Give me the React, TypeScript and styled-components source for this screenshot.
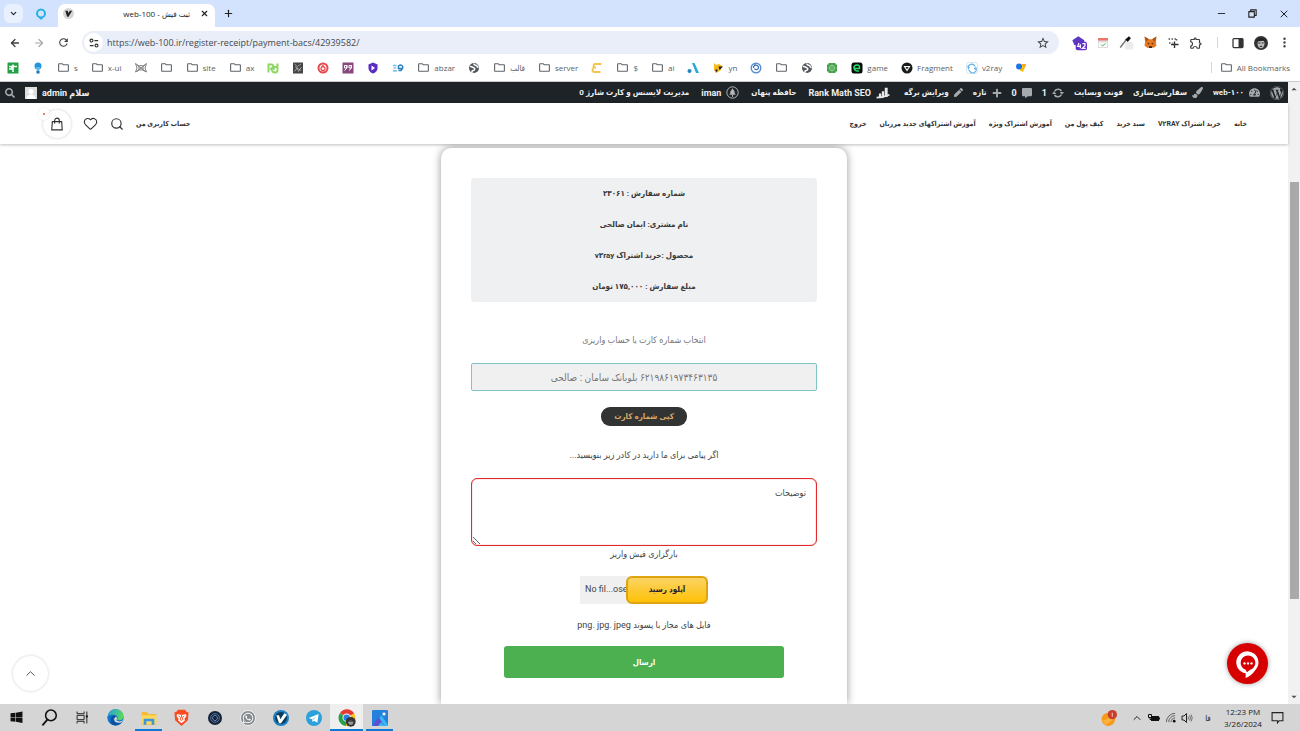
import React from 'react';
import styled, { createGlobalStyle, css } from 'styled-components';
import { ArrowLeft, ArrowRight, X, Minus, Plus, ChevronDown, ChevronUp, Heart, Search, EllipsisVertical } from 'lucide-react';
import { FaWordpress, FaTachometerAlt, FaPaintBrush, FaCommentAlt, FaPen, FaWhatsapp, FaSearch, FaPlus } from 'react-icons/fa';
import { MdOutlineExtension, MdOutlineFolder, MdStarBorder, MdRefresh } from 'react-icons/md';

const uiFont = "'Open Sans', 'Noto Sans', 'DejaVu Sans Condensed', 'DejaVu Sans', sans-serif";
const siteFont = "Roboto, 'DejaVu Sans Condensed', 'DejaVu Sans', sans-serif";

const GlobalStyle = createGlobalStyle`
  * { box-sizing: border-box; }
  body { margin: 0; background: #fff; font-family: ${uiFont}; }
  button { border: 0; padding: 0; background: none; font: inherit; color: inherit; cursor: pointer; }
  a { color: inherit; text-decoration: none; }
  svg { display: block; flex: none; }
`;

const Desktop = styled.div`
  display: flex;
  flex-direction: column;
  min-height: 100vh;
  overflow: hidden;
`;

/* ---------- browser frame ---------- */

const TabStrip = styled.header`
  display: flex;
  align-items: center;
  height: 27px;
  padding: 0 10px 0 4px;
  background: #d3e3fd;
  color: #1f1f1f;
`;

const TabSearch = styled.button`
  display: grid;
  place-items: center;
  width: 19px;
  height: 19px;
  border-radius: 6px;
  background: #e9f1fe;
`;

const PinnedTab = styled.button`
  display: grid;
  place-items: center;
  width: 35px;
  height: 27px;
`;

const ActiveTab = styled.div`
  display: flex;
  align-items: center;
  align-self: flex-end;
  width: 157px;
  height: 23px;
  padding: 0 6px 4px 5px;
  border-radius: 7px 7px 0 0;
  background: #fff;
`;

const TabTitle = styled.span`
  flex: 1;
  padding-right: 10px;
  font-size: 8px;
  text-align: right;
  white-space: nowrap;
`;

const NewTab = styled.button`
  margin-left: 8px;
`;

const WindowButtons = styled.div`
  display: flex;
  gap: 20px;
  margin-left: auto;
`;

const Toolbar = styled.div`
  display: flex;
  align-items: center;
  height: 31px;
  padding: 0 9px;
  background: #fff;
  color: #3c3f43;
`;

const NavButtons = styled.div`
  display: flex;
  align-items: center;
  gap: 12px;
  margin-right: 12px;
`;

const AddressBar = styled.label`
  display: flex;
  align-items: center;
  flex: 1;
  height: 23px;
  padding: 0 9px 0 2px;
  border-radius: 12px;
  background: #eaeef8;
`;

const SiteInfo = styled.span`
  display: grid;
  place-items: center;
  width: 19px;
  height: 19px;
  border-radius: 50%;
  background: #fff;
`;

const AddressInput = styled.input`
  flex: 1;
  min-width: 0;
  padding: 0 4px;
  border: 0;
  outline: 0;
  background: none;
  color: #45484d;
  font: 9px ${uiFont};
`;

const Extensions = styled.div`
  display: flex;
  align-items: center;
  gap: 10px;
  margin-left: 12px;
`;

const Divider = styled.span`
  width: 1px;
  height: 11px;
  margin: 0 4px;
  background: #c4daf8;
`;

const Avatar = styled.span`
  display: grid;
  place-items: center;
  width: 14px;
  height: 14px;
  border-radius: 50%;
  overflow: hidden;
`;

const BookmarkBar = styled.nav`
  display: flex;
  align-items: center;
  gap: 13px;
  height: 24px;
  padding: 0 10px 4px 7px;
  border-bottom: 1px solid #c9cbce;
  background: #fff;
`;

const BookmarkLink = styled.a`
  display: flex;
  align-items: center;
  gap: 4px;
  color: #5b5f64;
  font-size: 8px;
  white-space: nowrap;
`;

const AllBookmarks = styled.span`
  display: flex;
  align-items: center;
  gap: 4px;
  margin-left: auto;
`;

/* ---------- page inside the browser ---------- */

const Viewport = styled.div`
  display: flex;
  flex: 1;
`;

const Site = styled.div`
  position: relative;
  display: flex;
  flex-direction: column;
  flex: 1;
  min-width: 0;
  font-family: ${siteFont};
  direction: rtl;
`;

const AdminBar = styled.div`
  display: flex;
  align-items: center;
  height: 21px;
  padding: 0 4px 0 5px;
  background: #1d2327;
  color: #eef0f1;
`;

const AdminGroup = styled.div<{ $gap?: number; $end?: boolean }>`
  display: flex;
  align-items: center;
  gap: ${(p) => p.$gap ?? 10}px;
  margin-right: ${(p) => (p.$end ? 'auto' : 0)};
`;

const AdminLink = styled.a<{ $latin?: boolean }>`
  display: flex;
  align-items: center;
  gap: 5px;
  font-size: ${(p) => (p.$latin ? 9 : 8)}px;
  font-weight: 700;
  line-height: 20px;
  white-space: nowrap;
  svg { color: #a7aaad; }
`;

const AdminSeparator = styled.span`
  width: 14px;
`;

const SiteHeader = styled.header`
  position: relative;
  display: flex;
  align-items: center;
  justify-content: space-between;
  height: 41px;
  padding: 0 41px 0 43px;
  background: #fff;
  box-shadow: 0 1px 3px rgba(0, 0, 0, 0.25);
  color: #333;
  font-size: 7px;
  font-weight: 700;
`;

const MainNav = styled.nav`
  display: flex;
  gap: 13px;
  white-space: nowrap;
`;

const AccountTools = styled.div`
  display: flex;
  align-items: center;
  gap: 12px;
`;

const CartButton = styled.button`
  position: relative;
  display: grid;
  place-items: center;
  width: 28px;
  height: 28px;
  border-radius: 50%;
  background: #fff;
  box-shadow: 0 0 3px rgba(0, 0, 0, 0.22);
`;

const CartBadge = styled.span`
  position: absolute;
  top: -2px;
  left: -5px;
  display: grid;
  place-items: center;
  width: 12px;
  height: 12px;
  border-radius: 50%;
  background: #fff;
  box-shadow: 0 0 2px rgba(0, 0, 0, 0.12);
  &::after {
    content: '';
    width: 2px;
    height: 2px;
    border-radius: 50%;
    background: #e55;
  }
`;

const Main = styled.main`
  display: flex;
  justify-content: center;
  flex: 1;
  padding-top: 4px;
  overflow: hidden;
  background: #fff;
`;

const Card = styled.form`
  display: flex;
  flex-direction: column;
  align-items: center;
  width: 406px;
  padding: 30px 30px 24px;
  border-radius: 10px 10px 0 0;
  background: #fff;
  box-shadow: 0 0 9px rgba(0, 0, 0, 0.42);
  color: #444;
  font-size: 9px;
`;

const Summary = styled.section`
  align-self: stretch;
  border-radius: 3px;
  background: #eff0f2;
`;

const SummaryLine = styled.p`
  margin: 0;
  color: #3a3a3a;
  font-size: 8px;
  font-weight: 700;
  line-height: 31px;
  text-align: center;
`;

const FieldLabel = styled.label<{ $top?: number; $bottom?: number; $muted?: boolean }>`
  margin-top: ${(p) => p.$top ?? 0}px;
  margin-bottom: ${(p) => p.$bottom ?? 0}px;
  color: ${(p) => (p.$muted ? '#777' : '#444')};
  line-height: 16px;
  text-align: center;
`;

const control = css`
  align-self: stretch;
  margin: 0;
  outline: 0;
`;

const CardSelect = styled.select`
  ${control}
  height: 28px;
  padding: 0 20px 0 0;
  border: 1px solid #7cc5c5;
  border-radius: 2px;
  appearance: none;
  background: #f0f0f0;
  color: #777;
  font: 10px ${siteFont};
  text-align: center;
  text-align-last: center;
`;

const CopyButton = styled.button`
  width: 86px;
  height: 19px;
  margin-top: 16px;
  border-radius: 9px;
  background: #323434;
  color: #d9a768;
  font-size: 8px;
  font-weight: 700;
`;

const Notes = styled.textarea`
  ${control}
  height: 68px;
  padding: 6px 10px;
  border: 1px solid #e02b30;
  border-radius: 6px;
  box-shadow: inset 0 0 1px #e02b30;
  font: 9px/16px ${siteFont};
  resize: vertical;
  &::placeholder { color: #444; opacity: 1; }
`;

const Upload = styled.label`
  position: relative;
  display: flex;
  direction: ltr;
  height: 28px;
  margin-top: 14px;
  background: #f0f0f0;
  input {
    position: absolute;
    inset: 0;
    width: 100%;
    opacity: 0;
  }
`;

const FileName = styled.span`
  padding-left: 5px;
  width: 46px;
  line-height: 27px;
  white-space: nowrap;
`;

const UploadFace = styled.span`
  width: 82px;
  border: 2px solid #dfa30f;
  border-radius: 6px;
  background: linear-gradient(#fbd364, #ffc107);
  color: #221b2c;
  font-size: 8px;
  font-weight: 700;
  line-height: 24px;
  text-align: center;
`;

const Submit = styled.button`
  width: 280px;
  height: 32px;
  margin-top: 13px;
  border-radius: 3px;
  background: #4caf50;
  color: #fff;
  font-size: 8px;
  font-weight: 700;
`;

const ToTop = styled.button`
  position: absolute;
  left: 13px;
  bottom: 13px;
  display: grid;
  place-items: center;
  width: 35px;
  height: 35px;
  border-radius: 50%;
  background: #fff;
  box-shadow: 0 0 3px rgba(0, 0, 0, 0.2);
  color: #555;
`;

const ChatButton = styled.button`
  position: absolute;
  right: 20px;
  bottom: 20px;
  display: grid;
  place-items: center;
  width: 41px;
  height: 41px;
  border-radius: 50%;
  background: #d60000;
  box-shadow: 0 0 5px rgba(0, 0, 0, 0.4);
`;

const Scrollbar = styled.div`
  display: flex;
  flex-direction: column;
  align-items: center;
  width: 12px;
  padding: 3px 0;
  background: #f1f1f1;
`;

const Track = styled.span<{ $grow: number }>`
  flex: ${(p) => p.$grow} 0 0;
`;

const Thumb = styled.span`
  flex: 414 0 0;
  width: 9px;
  background: #a9a9a9;
`;

/* ---------- taskbar ---------- */

const Taskbar = styled.footer`
  display: flex;
  align-items: center;
  justify-content: space-between;
  height: 27px;
  padding-right: 16px;
  background: #d5d5d5;
  color: #222;
`;

const TaskGroup = styled.div`
  display: flex;
`;

const TaskButton = styled.button<{ $open?: boolean; $active?: boolean }>`
  position: relative;
  display: grid;
  place-items: center;
  width: 33px;
  height: 27px;
  background: ${(p) => (p.$active ? '#efefef' : 'none')};
  &::after {
    content: '';
    position: absolute;
    bottom: 0;
    left: ${(p) => (p.$active ? 0 : 3)}px;
    right: ${(p) => (p.$active ? 0 : 3)}px;
    height: ${(p) => (p.$open || p.$active ? 2 : 0)}px;
    background: #0a7ad6;
  }
`;

const WhatsAppBadge = styled.span`
  display: grid;
  place-items: center;
  width: 16px;
  height: 16px;
  border: 1px solid #f2f2f2;
  border-radius: 50%;
  background: #858a8e;
  color: #fff;
`;

const Tray = styled.div`
  display: flex;
  align-items: center;
  gap: 5px;
  font-size: 8px;
`;

const TrayLanguage = styled.span`
  width: 20px;
  text-align: center;
`;

const WeatherIcon = styled.span`
  margin-right: 9px;
`;

const Clock = styled.time`
  width: 40px;
  margin-right: 3px;
  line-height: 12px;
  text-align: center;
  white-space: nowrap;
`;

/* ---------- drawings ---------- */

const Svg = ({ s = 12, v = 24, children }: { s?: number; v?: number; children: React.ReactNode }) => (
  <svg width={s} height={s} viewBox={`0 0 ${v} ${v}`} fill="none" aria-hidden="true">{children}</svg>
);

const Dir = () => <MdOutlineFolder size={13} color="#5f6368" />;

const Globe = () => (
  <Svg><circle cx="12" cy="12" r="10" fill="#53575c" /><path d="M4 9c4-1 5 2 8 3s1 5-2 5-2 3-1 4M12 3c-1 3 3 3 5 4s0 4 4 4" stroke="#fff" strokeWidth="3" /></Svg>
);

const Portrait = () => (
  <Svg s={14}><rect width="24" height="24" fill="#333" /><ellipse cx="12" cy="13" rx="6" ry="8" fill="#bbb" /><path d="M4 10C6 2 18 1 20 10l-4-2-8 1z" fill="#222" /><path d="M7 11h4v2H7zM13 11h4l-1 2h-3zM10 17q2-1 4 0v2h-4z" fill="#333" /></Svg>
);

type Mark = { label?: string; icon: React.ReactNode; latin?: boolean };

const bookmarks: Mark[] = [
  { icon: <Svg><rect x="1" y="1" width="22" height="22" rx="1" fill="#23a045" /><path d="M4 9h16M12 5v15M9 9v5H4" stroke="#fff" strokeWidth="3" /></Svg> },
  { icon: <Svg><circle cx="12" cy="8" r="7" fill="#2295dc" /><path d="M7 10h10l-3 6h-4z" fill="#57bce9" /><rect x="9" y="17" width="6" height="6" fill="#1872b4" /></Svg> },
  { label: 's', icon: <Dir /> },
  { label: 'x-ui', icon: <Dir /> },
  { icon: <Svg><path d="M1 3l7 5 4-1 4 1 7-5-3 9 3 8-8-4H9l-8 4 3-8zM4 6l16 12M20 6L4 18M8 8v8M16 8v8" stroke="#808080" strokeWidth="2" /></Svg> },
  { icon: <Dir /> },
  { label: 'site', icon: <Dir /> },
  { label: 'ax', icon: <Dir /> },
  { icon: <Svg><path d="M3 21V5h6q4 0 3 5l-4 4 4 6q9 3 9-4V3M20 10h-4q-4 1-2 6" stroke="#8bd862" strokeWidth="4" /></Svg> },
  { icon: <Svg><rect x="2" y="1" width="20" height="22" fill="#444" /><path d="M5 4l6 5 7-5M5 19l5-7 3 7 6-9M6 9l12 8" stroke="#bbb" strokeWidth="1.5" /></Svg> },
  { icon: <Svg><circle cx="12" cy="12" r="9" stroke="#e5484d" strokeWidth="4" /><circle cx="12" cy="13" r="4" stroke="#e5484d" strokeWidth="2.5" /><path d="M12 6v5" stroke="#e5484d" strokeWidth="3" /></Svg> },
  { icon: <Svg><rect x="1" y="1" width="22" height="22" fill="#87467d" /><path d="M10 7H5v5h5V7q0 8-5 10M19 7h-5v5h5V7q0 8-5 10" stroke="#fff" strokeWidth="2" /></Svg> },
  { icon: <Svg><path d="M12 1l9 4v8q-1 7-9 10Q4 20 3 13V5z" fill="#5b2bc4" /><path d="M9 7l7 5-7 5z" fill="#fff" /></Svg> },
  { icon: <Svg><path d="M2 8q3-3 7 0M3 12h5M2 17q4 2 8 0" stroke="#7cc0e6" strokeWidth="3" /><path d="M12 9q4-5 8-2t-2 10h-5M13 7v6h7" stroke="#2b7fc0" strokeWidth="3" /></Svg> },
  { label: 'abzar', icon: <Dir /> },
  { icon: <Globe /> },
  { label: 'قالب', icon: <Dir /> },
  { label: 'server', icon: <Dir /> },
  { icon: <Svg><path d="M21 4H8q-3 0-3 7h5M4 13q-3 7 3 7h12" stroke="#f5c350" strokeWidth="4" /></Svg> },
  { label: '$', icon: <Dir /> },
  { label: 'ai', icon: <Dir /> },
  { icon: <Svg><path d="M10 2h5l9 20h-6z" fill="#2aa9d2" /><circle cx="5" cy="18" r="4" fill="#1f87bb" /></Svg> },
  { label: 'yn', icon: <Svg><path d="M4 2l4 4 6-2 7 4-4 9-9 5-4-6z" fill="#f6b91d" /><path d="M13 9h9l-7 7zM6 16l5-2-1 7z" fill="#222" /></Svg> },
  { icon: <Svg><circle cx="12" cy="12" r="9.500" stroke="#5b8fd0" strokeWidth="3" /><path d="M7 12a5 5 0 0 1 10-1c0 5-6 6-8 2M8 6q6-2 9 4" stroke="#3a6fb8" strokeWidth="2.400" /></Svg> },
  { icon: <Dir /> },
  { icon: <Globe /> },
  { icon: <Svg><path d="M5 2h14v3h3v14h-3v3H5v-3H2V5h3z" fill="#43a047" /><circle cx="12" cy="12" r="5" stroke="#a5d6a7" strokeWidth="2" /><path d="M12 3v18M3 12h18" stroke="#8bc98e" /></Svg> },
  { label: 'game', icon: <Svg><rect x="1" y="1" width="22" height="22" rx="5" fill="#070b09" /><path d="M7 13h10q1-7-5-7t-6 6q1 7 10 6" stroke="#2be06d" strokeWidth="3" /></Svg> },
  { label: 'Fragment', icon: <Svg><circle cx="12" cy="12" r="11" fill="#17191b" /><path d="M5 8h14l-7 11z" fill="#fff" /><path d="M9 10h6l-3 5z" fill="#17191b" /></Svg> },
  { label: 'v2ray', icon: <Svg><rect x="1" y="1" width="22" height="22" rx="4" stroke="#a9d3ef" /><path d="M5 14a7 7 0 0 1 11-8l2 3M19 10a7 7 0 0 1-11 9l-3-4M3 8l4 4M21 16l-5-4" stroke="#65b1e3" strokeWidth="2.4" /></Svg> },
  { icon: <Svg><path d="M9 5h13l-6 15-6-3z" fill="#fbbc05" /><circle cx="8" cy="9" r="6" fill="#1a73e8" /><path d="M13 4h9l-2 8z" fill="#f9a825" /></Svg> },
];

const TuneIcon = () => (
  <Svg s={10}><path d="M13 6h9M2 18h9" stroke="#333" strokeWidth="3" /><circle cx="6" cy="6" r="3.500" stroke="#333" strokeWidth="2.800" /><circle cx="18" cy="18" r="3.500" stroke="#333" strokeWidth="2.800" /></Svg>
);

const updatesIcon = (
  <Svg><path d="M5 9a8 8 0 0 1 14-1M19 15a8 8 0 0 1-14 1" stroke="#a7aaad" strokeWidth="3" /><path d="M15 10h9l-4 5zM0 14h9L4 9z" fill="#a7aaad" /></Svg>
);

const rankIcon = (
  <Svg s={14}><path d="M5 13h4v6H5zM10 9h4v10h-4zM15 3h5v16h-5z" fill="#e8e8e8" /><path d="M1 20q12 0 22-5" stroke="#e8e8e8" strokeWidth="3" /></Svg>
);

const litespeedIcon = (
  <Svg s={13}><circle cx="12" cy="12" r="10.500" stroke="#b5b8ba" strokeWidth="1.800" /><path d="M12 4l5 8h-2l3 4H6l3-4H7z" fill="#b5b8ba" /><path d="M12 16v4" stroke="#b5b8ba" strokeWidth="2" /></Svg>
);

const coreItems: Mark[] = [
  { icon: <FaWordpress size={14} /> },
  { label: 'web-۱۰۰', icon: <FaTachometerAlt size={11} /> },
  { label: 'سفارشی‌سازی', icon: <FaPaintBrush size={11} /> },
  { label: 'فونت وبسایت', icon: null },
  { label: '1', icon: updatesIcon, latin: true },
  { label: '0', icon: <FaCommentAlt size={10} />, latin: true },
  { label: 'تازه', icon: <FaPlus size={10} /> },
  { label: 'ویرایش برگه', icon: <FaPen size={9} /> },
];

const pluginItems: Mark[] = [
  { label: 'Rank Math SEO', icon: rankIcon, latin: true },
  { label: 'حافظه پنهان', icon: null },
  { label: 'iman', icon: litespeedIcon, latin: true },
  { label: 'مدیریت لایسنس و کارت شارژ 0', icon: null },
];

const navItems = [
  'خانه', 'خرید اشتراک V۲RAY', 'سبد خرید', 'کیف پول من', 'آموزش اشتراک ویژه',
  'آموزش اشتراکهای جدید مرزبان', 'خروج',
];

const tasks: { name: string; icon: React.ReactNode; open?: boolean; active?: boolean }[] = [
  { name: 'Start', icon: <Svg s={13}><path d="M1 4l9-1v8H1zM11 3l12-2v10H11zM1 12h9v8l-9-1zM11 12h12v10l-12-2z" fill="#111" /></Svg> },
  { name: 'Search', icon: <Svg s={17}><circle cx="14" cy="9" r="7.5" stroke="#111" strokeWidth="2.2" /><path d="M9 15l-7 8" stroke="#111" strokeWidth="2.6" /></Svg> },
  { name: 'Task view', icon: <Svg s={13}><path d="M2 1v4h13V1M2 23v-4h13v4M2 8h13v8H2zM20 1v22" stroke="#222" strokeWidth="1.8" /><path d="M18 8h4v4h-4z" fill="#222" /></Svg> },
  { name: 'Edge', icon: (
    <Svg s={17}>
      <defs>
        <linearGradient id="edgeTop" x1="0" y1="0" x2="24" y2="10" gradientUnits="userSpaceOnUse"><stop stopColor="#1f9fe0" /><stop offset="1" stopColor="#5ddb5a" /></linearGradient>
      </defs>
      <circle cx="12" cy="12" r="11.5" fill="#1272c8" />
      <path d="M1 10C3 2 9 0 13 .5c7 .5 11 5 10.500 10.500C23 16 17 17 14 15c3-4-1-7-5-7-4 0-7 1-8 2z" fill="url(#edgeTop)" />
      <path d="M9 13c-1 6 5 8 12 5-3 5-9 6-13 4S4 10 10 9c3 0 4 2 3 4z" fill="#0d4f9e" />
      <path d="M12 11q4 1 1 5 4 3 10 0l-3 3q-9 2-10-5z" fill="#d5d5d5" />
    </Svg>) },
  { name: 'File Explorer', open: true, icon: <Svg s={16}><path d="M1 3h8l2 3h12v16H1z" fill="#f5bb35" /><path d="M1 8h22v13H1z" fill="#ffd95e" /><path d="M4 13h16v9h-4v-5H8v5H4z" fill="#3a96dd" /></Svg> },
  { name: 'Brave', icon: <Svg s={17}><path d="M7 1h10l2 3 3 1-1 11-9 8-9-8L2 5l3-1z" fill="#fb4b20" /><path d="M6 7l4 1h4l4-1 1 3-3 4 1 2-5 4-5-4 1-2-3-4z" fill="#fff" /><path d="M8 10l3 2-1 3 2 1 2-1-1-3 3-2M12 8v4" stroke="#fb4b20" strokeWidth="1.300" /></Svg> },
  { name: 'Circle app', icon: <Svg s={14}><circle cx="12" cy="12" r="12" fill="#152238" /><circle cx="12" cy="12" r="7.500" stroke="#5878a8" strokeWidth="1.600" /><path d="M12 7l4 3v4l-4 3-4-3v-4z" stroke="#6f90c4" strokeWidth="1.500" /></Svg> },
  { name: 'WhatsApp', icon: <WhatsAppBadge><FaWhatsapp size={12} /></WhatsAppBadge> },
  { name: 'Vivaldi', icon: <Svg s={16}><circle cx="12" cy="12" r="12" fill="#1981c4" /><circle cx="12" cy="12" r="9" fill="#0d3d5c" /><path d="M5 8h4l2 6 6-9 4 2-9 13h-3z" fill="#fff" /></Svg> },
  { name: 'Telegram', icon: <Svg s={16}><circle cx="12" cy="12" r="12" fill="#2aa1db" /><path d="M4 12l15-6-2 13-5-3-2 2-1-4z" fill="#fff" /><path d="M9 14l7-5-5 6" fill="#9fd0ea" /></Svg> },
  { name: 'Chrome', active: true, icon: (
    <Svg s={18}>
      <path d="M12 11L2.500 5.500A11 11 0 0 1 21.500 6z" fill="#e33b2e" />
      <path d="M12 12L2.500 5.500a11 11 0 0 0 8 17z" fill="#24a148" />
      <path d="M12 12l9.500-6a11 11 0 0 1-11 16.500z" fill="#fbc116" />
      <circle cx="11.500" cy="11.500" r="5.500" fill="#fff" /><circle cx="11.500" cy="11.500" r="4.300" fill="#2f7de1" />
      <circle cx="17" cy="17" r="6.500" fill="#333" /><path d="M13 17q4-5 8 0l-2 4h-4z" fill="#999" /><path d="M13 16h8" stroke="#222" strokeWidth="1.500" />
    </Svg>) },
  { name: 'Photos', open: true, icon: <Svg s={16}><rect width="24" height="24" rx="2" fill="#2380dc" /><path d="M3 24L14 8l10 14v2z" fill="#35b7ef" /><path d="M0 24L10 11l9 13z" fill="#5d4fd0" /><path d="M9 24l5-6 5 6z" fill="#35b7ef" /><rect x="16" y="4" width="4" height="4" fill="#fff" /></Svg> },
];

const AdminItems = ({ items }: { items: Mark[] }) => (
  <>
    {items.map((a, i) => (
      <AdminLink href="#" key={i} $latin={a.latin} aria-label={a.label ?? 'WordPress'}>{a.icon}{a.label}</AdminLink>
    ))}
  </>
);

export default function App() {
  return (
    <>
      <GlobalStyle />
      <Desktop>
        <TabStrip>
          <TabSearch aria-label="Search tabs"><ChevronDown size={9} strokeWidth={3} /></TabSearch>
          <PinnedTab aria-label="Pinned tab">
            <Svg s={12}><path d="M12 1a10 10 0 0 1 8 16l-4 3-4 4-4-4-4-3a10 10 0 0 1 8-16z" fill="#25b0e2" /><circle cx="12" cy="11" r="6" fill="#d3e3fd" /></Svg>
          </PinnedTab>
          <ActiveTab>
            <Svg s={11}><circle cx="12" cy="12" r="12" fill="#d6d6d6" /><path d="M5 6h5l2 5 3-5h5l-8 13H9z" fill="#222" /></Svg>
            <TabTitle dir="rtl">ثبت فیش - web-100</TabTitle>
            <button aria-label="Close tab"><X size={9} strokeWidth={3} /></button>
          </ActiveTab>
          <NewTab aria-label="New tab"><Plus size={11} strokeWidth={2.5} /></NewTab>
          <WindowButtons>
            <button aria-label="Minimize"><Minus size={11} strokeWidth={2} /></button>
            <button aria-label="Restore"><Svg s={11}><path d="M4 8h12v12H4zM8 8V4h12v12h-4" stroke="#222" strokeWidth="2.400" /></Svg></button>
            <button aria-label="Close"><X size={12} strokeWidth={2} /></button>
          </WindowButtons>
        </TabStrip>

        <Toolbar>
          <NavButtons>
            <button aria-label="Back"><ArrowLeft size={12} strokeWidth={2.6} /></button>
            <button aria-label="Forward"><ArrowRight size={12} strokeWidth={2.4} color="#a5a7aa" /></button>
            <button aria-label="Reload"><MdRefresh size={13} /></button>
          </NavButtons>
          <AddressBar>
            <SiteInfo><TuneIcon /></SiteInfo>
            <AddressInput aria-label="Address" defaultValue="https://web-100.ir/register-receipt/payment-bacs/42939582/" />
            <MdStarBorder size={14} />
          </AddressBar>
          <Extensions>
            <Svg s={16}><path d="M2 8l9-6 9 6v7H5z" fill="#5a38c0" /><rect x="7" y="10" width="17" height="13" rx="3" fill="#6230cc" /><path d="M12 12l-2 5h5M14 14v6M17 13h4v3l-4 4h5" stroke="#fff" strokeWidth="1.800" /></Svg>
            <Svg s={12}><rect x="2" y="2" width="20" height="20" fill="#ddd" /><rect x="2" y="2" width="20" height="5" fill="#ee7868" /><path d="M4 11h16v9H4z" fill="#fff" /><path d="M8 15l3 3 6-5" stroke="#4caf50" strokeWidth="2" /></Svg>
            <Svg s={15}><rect x="9" y="11" width="14" height="12" rx="3" fill="#ececec" /><path d="M2 20L12 7" stroke="#777" strokeWidth="2.500" /><path d="M10 7l6-5 3 3-5 6z" fill="#111" /></Svg>
            <Svg s={13}><path d="M1 1l8 5h6l8-5-1 10 1 7-6 4-3-2h-4l-3 2-6-4 1-7z" fill="#e8781e" /><path d="M6 12l4 2-1 2zM18 12l-4 2 1 2zM9 19h6v3H9z" fill="#33251d" /><path d="M1 1l8 5-5 4zM23 1l-8 5 5 4z" fill="#a85016" /></Svg>
            <Svg s={12}><path d="M3 4h16M4 12h7M19 4v5" stroke="#555" strokeWidth="3" strokeDasharray="3 3" /><path d="M15 9v13M8 15h15" stroke="#333" strokeWidth="2.800" /></Svg>
            <MdOutlineExtension size={14} />
            <Divider />
            <Svg s={12}><rect x="2" y="3" width="20" height="18" rx="2" stroke="#333" strokeWidth="2.500" /><path d="M13 3h9v18h-9z" fill="#333" /></Svg>
            <Avatar><Portrait /></Avatar>
            <EllipsisVertical size={13} strokeWidth={2.5} />
          </Extensions>
        </Toolbar>

        <BookmarkBar>
          {bookmarks.map((b, i) => (
            <BookmarkLink href="#" key={i} aria-label={b.label ?? 'Bookmark'}>{b.icon}{b.label}</BookmarkLink>
          ))}
          <AllBookmarks>
            <Divider />
            <BookmarkLink href="#"><Dir />All Bookmarks</BookmarkLink>
          </AllBookmarks>
        </BookmarkBar>

        <Viewport>
          <Site>
            <AdminBar>
              <AdminGroup><AdminItems items={coreItems} /></AdminGroup>
              <AdminSeparator />
              <AdminGroup $gap={12}><AdminItems items={pluginItems} /></AdminGroup>
              <AdminGroup $end>
                <AdminLink href="#" $latin>
                  سلام admin
                  <Svg s={12}><rect width="24" height="24" fill="#ddd" /><circle cx="12" cy="9" r="5" fill="#fff" /><path d="M3 24q1-9 9-9t9 9z" fill="#fff" /></Svg>
                </AdminLink>
                <AdminLink href="#" aria-label="Search"><FaSearch size={10} /></AdminLink>
              </AdminGroup>
            </AdminBar>

            <SiteHeader>
              <MainNav>{navItems.map((n) => <a href="#" key={n}>{n}</a>)}</MainNav>
              <AccountTools>
                <a href="#">حساب کاربری من</a>
                <button aria-label="Search"><Search size={14} strokeWidth={2} /></button>
                <button aria-label="Wishlist"><Heart size={15} strokeWidth={1.8} /></button>
                <CartButton aria-label="Cart" type="button">
                  <Svg s={14}><path d="M4 8h16l1 14H3zM8 11V6a4 4 0 0 1 8 0v5" stroke="#333" strokeWidth="1.900" /></Svg>
                  <CartBadge />
                </CartButton>
              </AccountTools>
            </SiteHeader>

            <Main>
              <Card onSubmit={(e) => e.preventDefault()}>
                <Summary>
                  <SummaryLine>شماره سفارش : ۲۳۰۶۱</SummaryLine>
                  <SummaryLine>نام مشتری: ایمان صالحی</SummaryLine>
                  <SummaryLine>محصول :خرید اشتراک v۲ray</SummaryLine>
                  <SummaryLine>مبلغ سفارش : ۱۷۵,۰۰۰ تومان</SummaryLine>
                </Summary>
                <FieldLabel htmlFor="account" $top={30} $bottom={15} $muted>انتخاب شماره کارت یا حساب واریزی</FieldLabel>
                <CardSelect id="account">
                  <option>۶۲۱۹۸۶۱۹۷۳۴۶۳۱۳۵ بلوبانک سامان : صالحی</option>
                </CardSelect>
                <CopyButton type="button">کپی شماره کارت</CopyButton>
                <FieldLabel htmlFor="notes" $top={21} $bottom={15}>اگر پیامی برای ما دارید در کادر زیر بنویسید...</FieldLabel>
                <Notes id="notes" placeholder="توضیحات" />
                <FieldLabel htmlFor="receipt">بارگزاری فیش واریز</FieldLabel>
                <Upload>
                  <FileName>No fil...ose</FileName>
                  <UploadFace>آپلود رسید</UploadFace>
                  <input id="receipt" type="file" />
                </Upload>
                <FieldLabel as="p" $top={13}>فایل های مجاز با پسوند png. jpg. jpeg</FieldLabel>
                <Submit type="submit">ارسال</Submit>
              </Card>
            </Main>

            <ToTop aria-label="Back to top"><ChevronUp size={15} strokeWidth={1.6} /></ToTop>
            <ChatButton aria-label="Chat">
              <Svg s={28}><path d="M10 24v-4a9.500 9.500 0 1 1 8-2.500Q15 22 10 24z" fill="#fff" /><path d="M10 17a6.300 6.300 0 1 1 4 0l-3 2z" fill="#d60000" /><circle cx="9" cy="11.500" r="1" fill="#fff" /><circle cx="12" cy="11.500" r="1" fill="#fff" /><circle cx="15" cy="11.500" r="1" fill="#fff" /></Svg>
            </ChatButton>
          </Site>
          <Scrollbar aria-hidden="true">
            <Svg s={8}><path d="M4 16h16l-8-8z" fill="#505050" /></Svg>
            <Track $grow={89} />
            <Thumb />
            <Track $grow={94} />
            <Svg s={8}><path d="M4 8h16l-8 8z" fill="#505050" /></Svg>
          </Scrollbar>
        </Viewport>

        <Taskbar>
          <TaskGroup>
            {tasks.map((t) => (
              <TaskButton key={t.name} aria-label={t.name} $open={t.open} $active={t.active}>{t.icon}</TaskButton>
            ))}
          </TaskGroup>
          <Tray>
            <WeatherIcon>
              <Svg s={16}><circle cx="11" cy="14" r="10" fill="#f79a1c" /><path d="M2 16q10-2 14-10l4 3q-3 9-13 13z" fill="#fbb23a" /><circle cx="17" cy="7" r="7" fill="#c93f2d" /><path d="M17 4v6" stroke="#eba59c" strokeWidth="2" /></Svg>
            </WeatherIcon>
            <ChevronUp size={12} strokeWidth={2} />
            <Svg s={12}><rect x="6" y="8" width="16" height="10" fill="#111" /><path d="M1 5h6v6H1zM4 11v4h3M23 11v4" stroke="#111" strokeWidth="2" /></Svg>
            <Svg s={11}><path d="M3 22A19 19 0 0 1 22 3M8 22A14 14 0 0 1 22 8M13 22a9 9 0 0 1 9-9" stroke="#555" strokeWidth="2" /><circle cx="20" cy="20" r="3" fill="#111" /></Svg>
            <Svg s={12}><path d="M2 8h4l5-5v18l-5-5H2z" stroke="#222" strokeWidth="2" /><path d="M14 9q2 3 0 6M17 7q4 5 0 10M20 5q5 7 0 14" stroke="#555" strokeWidth="1.600" /></Svg>
            <TrayLanguage>فا</TrayLanguage>
            <Clock>12:23 PM<br />3/26/2024</Clock>
            <Svg s={13}><path d="M2 3h20v15h-7l-3 4v-4H2z" stroke="#222" strokeWidth="2" /></Svg>
          </Tray>
        </Taskbar>
      </Desktop>
    </>
  );
}
